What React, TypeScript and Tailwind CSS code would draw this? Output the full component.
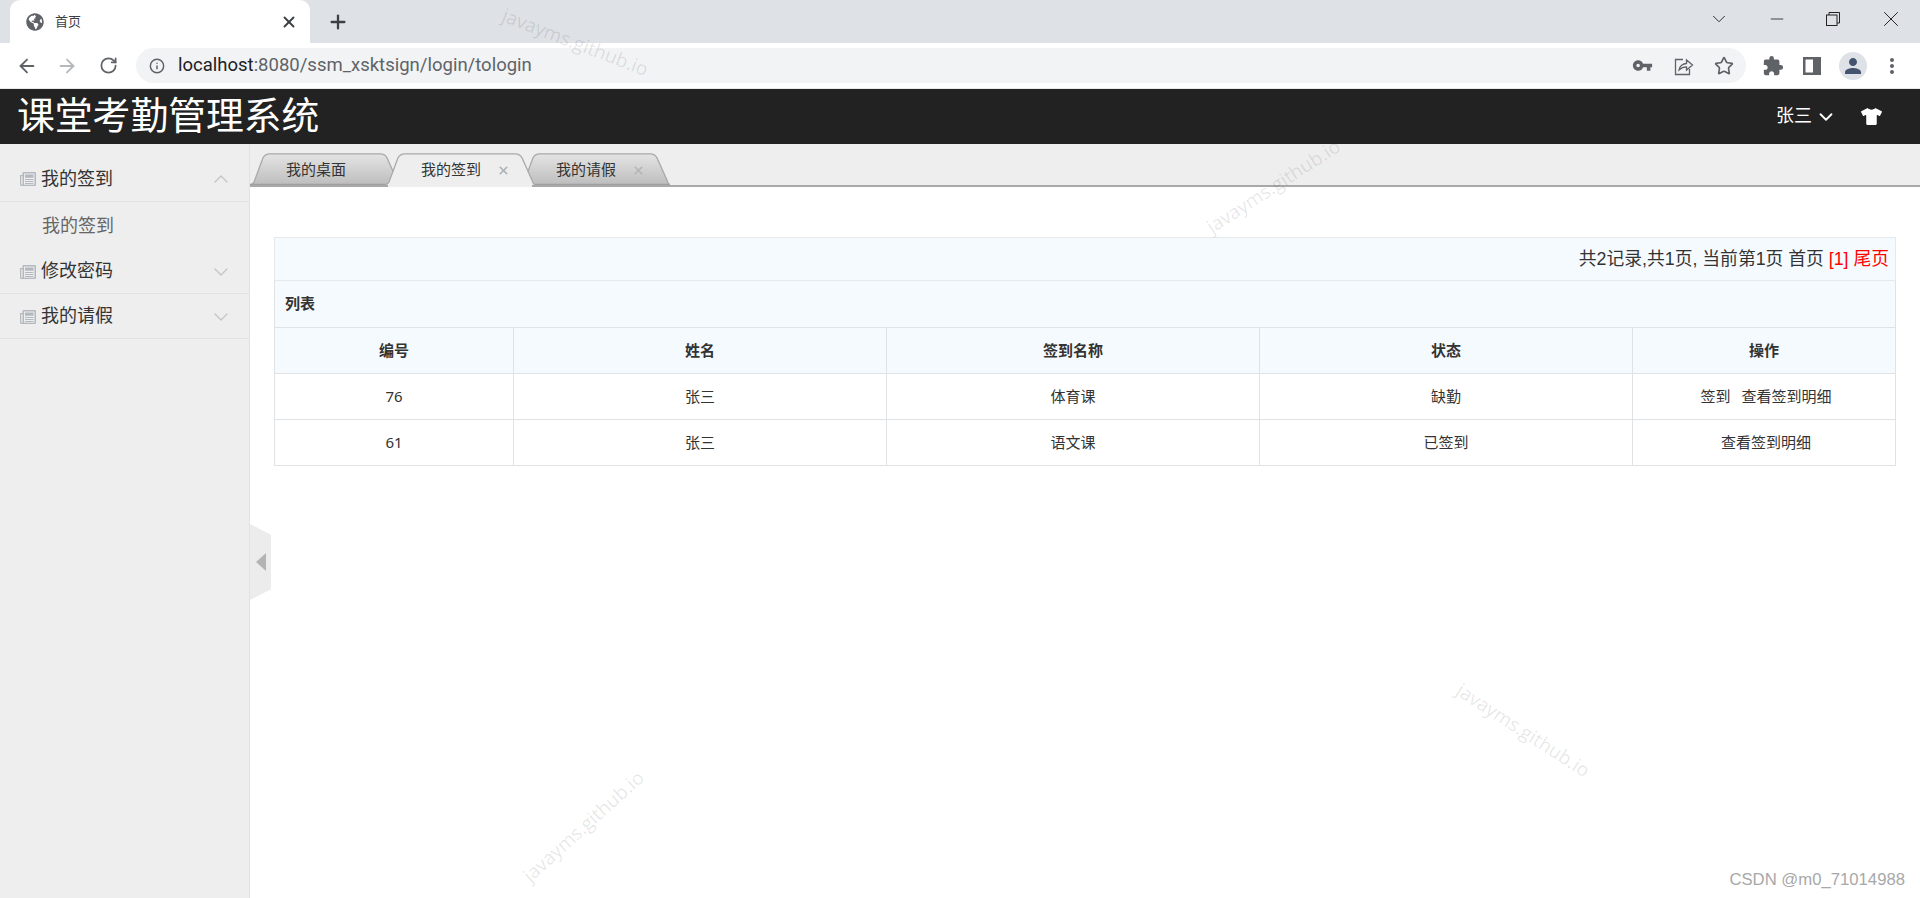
import { ArrowLeft, ArrowRight, ChevronDown, ChevronUp, Info, Minus, Plus, RotateCw, Star, X } from "lucide-react";
import { FaGlobeAmericas, FaTshirt } from "react-icons/fa";
import { MdExtension, MdMoreVert, MdPerson, MdVpnKey } from "react-icons/md";

const cjk = "font-['Liberation_Sans','Noto_Sans_CJK_SC',sans-serif]";

const menu = [
  { title: "我的签到", open: true, h: "h-[58px] pt-[13px]" },
  { title: "修改密码", open: false, h: "h-[45px] pt-[1px]" },
  { title: "我的请假", open: false, h: "h-[45px] pt-[1px]" },
];

const rows = [
  { id: "76", name: "张三", sign: "体育课", state: "缺勤", ops: ["签到", "查看签到明细"] },
  { id: "61", name: "张三", sign: "语文课", state: "已签到", ops: ["查看签到明细"] },
];

const headers = ["编号", "姓名", "签到名称", "状态", "操作"];

function NewsIcon() {
  return (
    <svg width="16" height="16" viewBox="0 0 16 16" className="shrink-0">
      <path
        d="M3.500 1H15a1 1 0 0 1 1 1V14a1 1 0 0 1-1 1H1.500A1.500 1.500 0 0 1 0 13.500V4h2.500V2a1 1 0 0 1 1-1Z"
        fill="#b4b8bf"
      />
      <path d="M1.200 5.200V13.200a.6.6 0 0 0 1.300 0V5.200Z" fill="#eeeeee" />
      <path d="M4 2.500H14.500V13.700H4Z" fill="#eeeeee" />
      <path d="M5 3.500H13.500V6.800H5ZM5 8H13.500V9H5ZM5 10H13.500V11H5ZM5 12H13.500V13H5Z" fill="#b4b8bf" />
    </svg>
  );
}

function TabShape({ active }: { active: boolean }) {
  const id = active ? "tabOn" : "tabOff";
  return (
    <svg className="absolute inset-0 h-full w-full" viewBox="0 0 150 33" preserveAspectRatio="none">
      <defs>
        <linearGradient id={id} x1="0" y1="0" x2="0" y2="1">
          <stop offset="0" stopColor={active ? "#eeeeee" : "#e4e4e4"} />
          <stop offset="1" stopColor={active ? "#eeeeee" : "#bdbdbd"} />
        </linearGradient>
      </defs>
      <path
        d="M0 33 Q3 32 4 30 L13 5 Q15 1 20 1 L130 1 Q135 1 137 5 L147 28 Q148 32 150 33"
        fill={`url(#${id})`}
        stroke="#a9a9a9"
        strokeWidth="1.3"
      />
      {!active && <line x1="0" y1="32.500" x2="150" y2="32.500" stroke="#a0a0a0" strokeWidth="1.500" />}
    </svg>
  );
}

function Tab({ label, active, closable }: { label: string; active?: boolean; closable?: boolean }) {
  return (
    <div className={`relative -mr-[15px] h-[32px] w-[150px] ${active ? "z-10" : ""}`}>
      <TabShape active={!!active} />
      <span className="absolute left-[36px] top-[7px] text-[15px] leading-[20px] text-[#333]">{label}</span>
      {closable && (
        <X
          size={13}
          strokeWidth={3}
          className={`absolute left-[112px] top-[11px] ${active ? "text-[#a9b0b8]" : "text-[#b4b4b4]"}`}
        />
      )}
      {active && <div className="absolute bottom-[-2px] left-[3px] h-[3px] w-[144px] bg-[#eeeeee]" />}
    </div>
  );
}

function Watermark({ className }: { className: string }) {
  return (
    <span
      className={`pointer-events-none absolute z-30 font-['Open_Sans',sans-serif] text-[19px] leading-[20px] whitespace-nowrap text-black/10 ${className}`}
    >
      javayms.github.io
    </span>
  );
}

function ChromeBar() {
  return (
    <div className="shrink-0">
      <div className="flex h-[43px] items-end bg-[#dee1e6]">
        <div className="ml-[10px] flex h-[43px] w-[300px] items-center rounded-t-[10px] bg-white pl-[16px] pr-[12px]">
          <FaGlobeAmericas size={18} className="text-[#5f6368]" />
          <span className="ml-[11px] flex-1 text-[13px] text-[#3c4043]">首页</span>
          <X size={18} strokeWidth={2.5} className="text-[#3c4043]" />
        </div>
        <Plus size={22} strokeWidth={2.5} className="mb-[10px] ml-[17px] text-[#3c4043]" />
        <div className="mb-[6px] ml-auto flex h-[37px] items-center pr-[16px] text-[#222]">
          <ChevronDown size={22} strokeWidth={1} className="mr-[37px]" />
          <Minus size={20} strokeWidth={1} className="mr-[39px]" />
          <svg width="14" height="14" viewBox="0 0 14 14" fill="none" stroke="#222" className="mr-[38px]">
            <rect x="0.500" y="3" width="10.500" height="10.500" />
            <path d="M3 3V0.500H13.500V11H11" />
          </svg>
          <X size={26} strokeWidth={0.9} />
        </div>
      </div>
      <div className="flex h-[45px] items-center bg-white pl-[16px] text-[#5f6368]">
        <ArrowLeft size={22} strokeWidth={2} />
        <ArrowRight size={22} strokeWidth={2} className="ml-[18px] text-[#b5b8bc]" />
        <RotateCw size={19} strokeWidth={2.2} className="ml-[21px]" />
        <div className="ml-[18px] flex h-[35px] w-[1610px] items-center rounded-full bg-[#f1f3f4] pl-[13px] pr-[11px]">
          <Info size={16} strokeWidth={2.2} />
          <span className="ml-[13px] flex-1 font-['Roboto',sans-serif] text-[18.5px] text-[#5f6368]">
            <span className="text-[#202124]">localhost</span>:8080/ssm_xsktsign/login/tologin
          </span>
          <MdVpnKey size={21} className="mr-[2px]" />
          <svg width="20" height="20" viewBox="0 0 20 20" fill="none" stroke="#5f6368" strokeWidth="1.3" className="ml-[19px]">
            <path d="M9 3.500H1.500V18.500H15.500V13" />
            <path d="M5 14C5.500 10 9 7.500 12.500 7.500V4L18.500 9L12.500 14V10.800C9.500 10.800 7 12 5 14Z" />
          </svg>
          <Star size={20} strokeWidth={2} className="ml-[20px] mr-[1px]" />
        </div>
        <MdExtension size={22} className="ml-[16px]" />
        <svg width="18" height="18" viewBox="0 0 18 18" className="ml-[19px]">
          <path d="M0 0H18V18H0Z M2.500 2.500V15.500H10V2.500Z" fill="#5f6368" fillRule="evenodd" />
        </svg>
        <div className="ml-[18px] flex h-[28px] w-[28px] items-center justify-center rounded-full bg-[#dee1e6]">
          <MdPerson size={24} className="text-[#44546f]" />
        </div>
        <MdMoreVert size={24} className="ml-[13px]" />
      </div>
    </div>
  );
}

function Sidebar() {
  return (
    <aside className="w-[250px] shrink-0 border-r border-[#e2e2e2] bg-[#eeeeee]">
      {menu.map((m) => (
        <div key={m.title}>
          <div className={`${m.h} flex items-center border-b border-[#e2e2e2] pl-[20px] pr-[16px] text-[#333]`}>
            <NewsIcon />
            <span className="ml-[5px] flex-1 text-[18px]">{m.title}</span>
            {m.open ? (
              <ChevronUp size={24} strokeWidth={1.3} className="text-[#c4c4c4]" />
            ) : (
              <ChevronDown size={24} strokeWidth={1.3} className="text-[#c4c4c4]" />
            )}
          </div>
          {m.open && <div className="flex h-[47px] items-center pl-[42px] pt-[2px] text-[18px] text-[#666]">我的签到</div>}
        </div>
      ))}
    </aside>
  );
}

function RecordTable() {
  const cell = "border border-[#dfe3e6] text-center text-[15px] text-[#333]";
  return (
    <table className="w-[1621px] table-fixed border-collapse font-['Noto_Sans','Noto_Sans_CJK_SC',sans-serif]">
      <colgroup>
        <col className="w-[239px]" />
        <col className="w-[373px]" />
        <col className="w-[373px]" />
        <col className="w-[373px]" />
        <col className="w-[263px]" />
      </colgroup>
      <tbody>
        <tr className="h-[43px] bg-[#f5fafe]">
          <td colSpan={5} className="border border-[#e6e9ec] pr-[6px] text-right font-['Liberation_Sans','Noto_Sans_CJK_SC',sans-serif] text-[17.8px] text-[#333]">
            共2记录,共1页, 当前第1页 首页 <span className="text-[#f00]">[1] 尾页</span>
          </td>
        </tr>
        <tr className="h-[47px] bg-[#f5fafe]">
          <td colSpan={5} className={`${cell} pb-[2px] pl-[10px] text-left font-bold`}>
            列表
          </td>
        </tr>
        <tr className="h-[46px] bg-[#f5fafe]">
          {headers.map((h) => (
            <th key={h} className={`${cell} font-bold`}>
              {h}
            </th>
          ))}
        </tr>
        {rows.map((r) => (
          <tr key={r.id} className="h-[46px]">
            <td className={cell}>{r.id}</td>
            <td className={cell}>{r.name}</td>
            <td className={cell}>{r.sign}</td>
            <td className={cell}>{r.state}</td>
            <td className={cell}>
              <div className="flex justify-center gap-[11px] pl-[4px]">
                {r.ops.map((o) => (
                  <span key={o}>{o}</span>
                ))}
              </div>
            </td>
          </tr>
        ))}
      </tbody>
    </table>
  );
}

export default function App() {
  return (
    <div className={`${cjk} relative flex h-[898px] w-[1920px] flex-col overflow-hidden bg-white`}>
      <ChromeBar />

      <header className="flex h-[56px] shrink-0 items-center border-t border-[#e8e8e8] bg-[#222222] pl-[17px] pr-[38px] text-white">
        <h1 className="flex-1 text-[37.8px] leading-none font-normal">课堂考勤管理系统</h1>
        <span className="text-[18px]">张三</span>
        <ChevronDown size={22} strokeWidth={2} className="ml-[3px]" />
        <FaTshirt size={21} className="ml-[24px]" />
      </header>

      <div className="flex min-h-0 flex-1">
        <Sidebar />
        <main className="relative min-w-0 flex-1">
          <div className="flex h-[43px] items-end border-b-[2px] border-[#a8a8a8] bg-[#eeeeee]">
            <Tab label="我的桌面" />
            <Tab label="我的签到" active closable />
            <Tab label="我的请假" closable />
          </div>
          <div className="pl-[24px] pt-[50px]">
            <RecordTable />
          </div>

          <div className="absolute left-0 top-[380px] flex h-[76px] w-[21px] items-center justify-center bg-[#ececec] [clip-path:polygon(0_0,100%_14%,100%_86%,0_100%)]">
            <svg width="10" height="18" viewBox="0 0 10 18">
              <path d="M10 0V18L0 9Z" fill="#b4b4b4" />
            </svg>
          </div>
        </main>
      </div>

      <Watermark className="left-[498px] top-[32px] rotate-[21deg]" />
      <Watermark className="left-[1196px] top-[176px] -rotate-[33deg]" />
      <Watermark className="left-[1446px] top-[720px] rotate-[33deg]" />
      <Watermark className="left-[506px] top-[816px] -rotate-[42deg]" />

      <span className="absolute right-[15px] top-[871px] font-['Liberation_Sans',sans-serif] text-[16.7px] leading-[18px] text-[#a8a8a8]">
        CSDN @m0_71014988
      </span>
    </div>
  );
}
